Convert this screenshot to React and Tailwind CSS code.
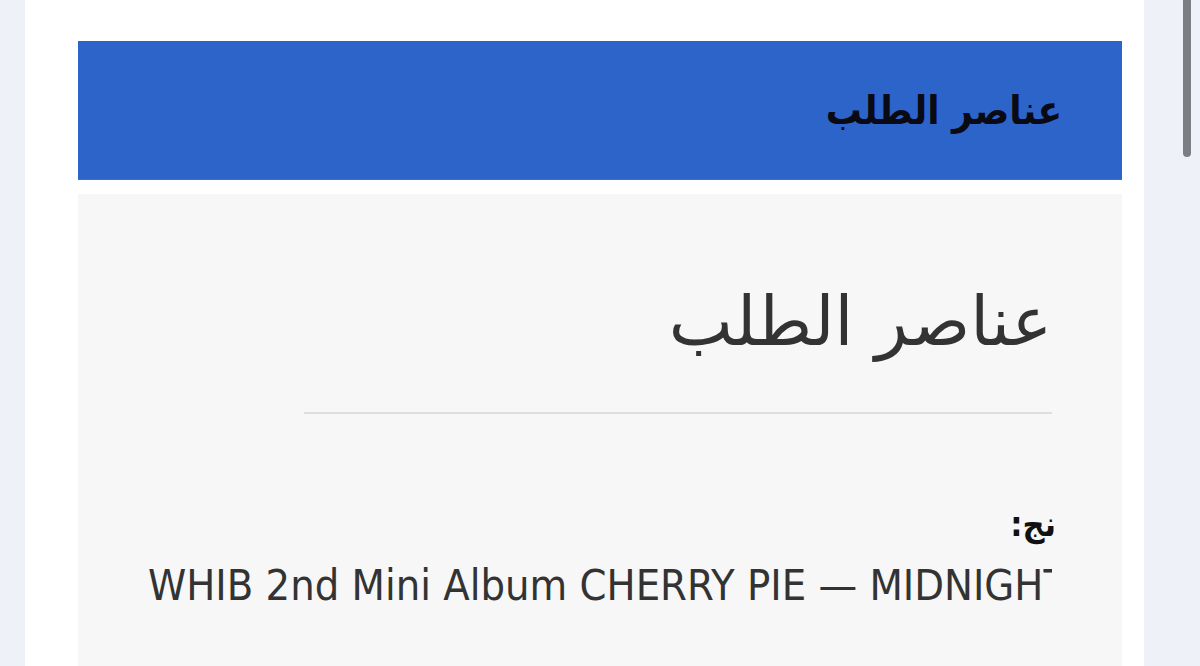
import React from 'react'

// Order page: header bar, then the "order items" card
function OrderItems() {
  return (
    <div dir="rtl" className="mt-[14px] bg-[#f7f7f7] pr-[70px] pl-[70px] pt-[88px] h-[480px]">
      <h2 className="text-[68px] leading-[80px] text-[#333] font-normal" style={{ fontFamily: '"DejaVu Sans", sans-serif' }}>
        عناصر الطلب
      </h2>
      <div className="mt-[50px] h-[2px] bg-[#dedede] ml-[156px]" />
      <div className="mt-[88px] -mr-[4px] text-[34px] leading-[44px] font-bold text-[#111]" style={{ fontFamily: '"DejaVu Sans Condensed", "DejaVu Sans", sans-serif' }}>
        نج:
      </div>
      <div dir="ltr" className="mt-[14px] overflow-hidden whitespace-nowrap text-[43px] leading-[50px] text-[#333]" style={{ fontFamily: '"DejaVu Sans Condensed", "DejaVu Sans", sans-serif', fontStretch: 'condensed' }}>
        WHIB 2nd Mini Album CHERRY PIE — MIDNIGHT Ver.
      </div>
    </div>
  )
}

export default function App() {
  return (
    <div className="w-[1200px] h-[666px] bg-[#eef2f8] flex overflow-hidden">
      <div className="ml-[25px] w-[1119px] h-full bg-white pt-[41px] pl-[53px] pr-[22px]">
        <div dir="rtl" className="h-[139px] bg-[#2d64c9] border-b border-[#3a6fd0] flex items-center pr-[60px]">
          <span className="text-[40px] font-bold text-[#0a0a14]" style={{ fontFamily: '"DejaVu Sans Condensed", "DejaVu Sans", sans-serif' }}>
            عناصر الطلب
          </span>
        </div>
        <OrderItems />
      </div>
      {/* scroll thumb */}
      <div className="ml-[39px] w-[8px] h-[157px] rounded-b-full bg-[#7b7e82]" />
    </div>
  )
}
